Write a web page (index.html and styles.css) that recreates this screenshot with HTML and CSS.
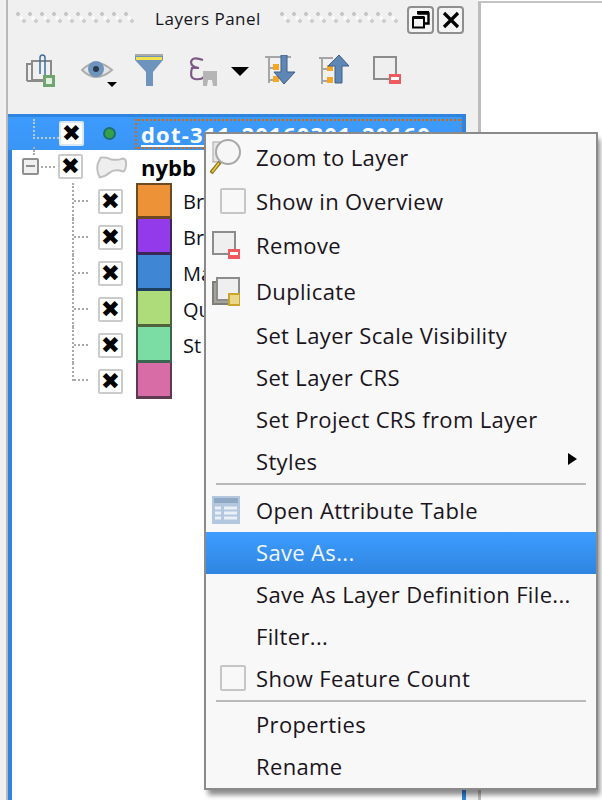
FILE: index.html
```html
<!DOCTYPE html>
<html lang="en">
<head>
<meta charset="utf-8">
<title>Layers Panel</title>
<link rel="stylesheet" href="styles.css">
</head>
<body>
<div class="app">
  <aside class="dock">
    <header class="titlebar">
      <span class="grip grip-left"></span>
      <span class="title">Layers Panel</span>
      <span class="grip grip-right"></span>
      <button class="winbtn">
        <svg width="22" height="22" viewBox="0 0 22 22"><path d="M7.500 4.500h11v10h-4" fill="none" stroke="#000" stroke-width="2.400"/><rect x="7" y="2" width="12" height="3" fill="#000"/><rect x="3" y="8.500" width="11" height="10" fill="none" stroke="#000" stroke-width="2"/><rect x="3" y="7" width="11" height="3" fill="#000"/></svg>
      </button>
      <button class="winbtn">
        <svg width="20" height="20" viewBox="0 0 20 20"><path d="M3 3l14 14M17 3L3 17" stroke="#000" stroke-width="3.200"/></svg>
      </button>
    </header>
    <nav class="toolbar">
      <svg class="tool tool-add" width="30" height="34" viewBox="0 0 30 34">
        <path d="M1 27V10h4M1 27h18" fill="none" stroke="#8b8b8b" stroke-width="2"/>
        <rect x="6" y="7" width="19" height="19" fill="none" stroke="#8b8b8b" stroke-width="2"/>
        <path d="M14 20V4q0-3 2.500-3T19 4v17" fill="none" stroke="#3f6f9e" stroke-width="1.500"/>
        <rect x="17" y="21" width="12" height="12" fill="#6fa56f"/><rect x="20" y="24" width="6" height="6" fill="#e4efe2"/>
      </svg>
      <span class="tool tool-eye">
        <svg width="36" height="30" viewBox="0 0 36 30">
          <path d="M1 13Q15-1 31 13Q15 27 1 13Z" fill="#e4e4e4" stroke="#adadad" stroke-width="2"/>
          <circle cx="15" cy="12" r="8" fill="#6e93bd"/><circle cx="15" cy="12" r="3" fill="#29394a"/>
          <path d="M26 25h10l-5 5z" fill="#000"/>
        </svg>
      </span>
      <svg class="tool tool-filter" width="28" height="32" viewBox="0 0 28 32">
        <path d="M0 1h28v5L18 18v14h-7V18L0 6z" fill="#6e93bd"/>
        <rect x="1" y="3" width="26" height="3" fill="#f2e14c"/><path d="M0 1h28" stroke="#a9a9a9" stroke-width="2"/>
      </svg>
      <span class="tool tool-expr">
        <svg width="60" height="32" viewBox="0 0 60 32">
          <path d="M14 4Q3 0 2 6q0 5 8 6H3Q0 22 6 23q6 1 9-2" fill="none" stroke="#7d5a85" stroke-width="2.200"/>
          <path d="M14 15h14v15h-4l-1-6h-4l-1 6h-4z" fill="#b5b5b5"/>
          <path d="M42 11h18l-9 9z" fill="#000"/>
        </svg>
      </span>
      <svg class="tool tool-expand" width="31" height="30" viewBox="0 0 31 30">
        <path d="M0 2h26M4 2v26M4 13h8M4 25h8" fill="none" stroke="#a6a6a6" stroke-width="2"/>
        <rect x="8" y="9" width="6" height="6" fill="#f5a623"/><rect x="8" y="21" width="6" height="6" fill="#f5a623"/>
        <path d="M16 0h6v17h8L19 29 9 17h7z" fill="#5f87b5" stroke="#3f5f85" stroke-width="1"/>
      </svg>
      <svg class="tool tool-collapse" width="31" height="30" viewBox="0 0 31 30">
        <path d="M0 4h14M3 4v26M3 15h8M3 27h8" fill="none" stroke="#a6a6a6" stroke-width="2"/>
        <rect x="8" y="11" width="6" height="6" fill="#f5a623"/><rect x="8" y="23" width="6" height="6" fill="#f5a623"/>
        <path d="M20 1l10 11h-7v17h-7V12H9z" fill="#5f87b5" stroke="#3f5f85" stroke-width="1"/>
      </svg>
      <svg class="tool tool-remove" width="28" height="28" viewBox="0 0 28 28">
        <rect x="1" y="1" width="22" height="22" fill="#efefef" stroke="#8c8c8c" stroke-width="2"/>
        <rect x="16" y="18" width="12" height="10" fill="#ee5a60"/><rect x="18" y="21" width="8" height="3" fill="#fff"/>
      </svg>
    </nav>
    <section class="tree">
      <div class="row row-selected">
        <span class="branch-root"></span>
        <span class="check check-on">✖</span>
        <span class="dot-slot"><i class="dot"></i></span>
        <span class="layer-name">dot-311_20160301_20160</span>
      </div>
      <div class="row row-group">
        <span class="expander"></span>
        <span class="branch-short"></span>
        <span class="check">✖</span>
        <svg class="poly" width="32" height="24" viewBox="0 0 34 24"><path d="M5 2q6-1 11 2q7 1 12-1q4 0 4 5q0 7-3 9q-8-3-13 0Q10 22 4 23Q0 17 2 8z" fill="#eeeeee" stroke="#bdbdbd" stroke-width="2"/></svg>
        <b class="group-name">nybb</b>
      </div>
      <ul class="legend">
        <li class="legend-row"><span class="branch-leaf"></span><span class="check">✖</span><span class="swatch swatch-orange"></span><span class="legend-label">Br</span></li>
        <li class="legend-row"><span class="branch-leaf"></span><span class="check">✖</span><span class="swatch swatch-purple"></span><span class="legend-label">Br</span></li>
        <li class="legend-row"><span class="branch-leaf"></span><span class="check">✖</span><span class="swatch swatch-blue"></span><span class="legend-label">Ma</span></li>
        <li class="legend-row"><span class="branch-leaf"></span><span class="check">✖</span><span class="swatch swatch-lime"></span><span class="legend-label">Qu</span></li>
        <li class="legend-row"><span class="branch-leaf"></span><span class="check">✖</span><span class="swatch swatch-mint"></span><span class="legend-label">St</span></li>
        <li class="legend-row legend-last"><span class="branch-leaf"></span><span class="check">✖</span><span class="swatch swatch-pink"></span></li>
      </ul>
    </section>
  </aside>
  <main class="canvas"></main>

  <div class="menu">
    <div class="item item-zoom"><span class="mi">
      <svg width="32" height="44" viewBox="0 0 32 44">
        <rect x="3" y="7" width="12" height="20" fill="#e6e6e6" stroke="#a5a5a5"/>
        <path d="M1 38l9-11" stroke="#8a7420" stroke-width="4"/><path d="M2 37l7-9" stroke="#f0d040" stroke-width="1.500"/>
        <circle cx="18" cy="17" r="12" fill="#f6f6f6" stroke="#a8a8a8" stroke-width="2"/>
      </svg></span>Zoom to Layer</div>
    <div class="item item-overview"><span class="mi"><span class="menu-check"></span></span>Show in Overview</div>
    <div class="item item-tall"><span class="mi">
      <svg width="28" height="28" viewBox="0 0 28 28">
        <rect x="1" y="1" width="22" height="22" fill="#efefef" stroke="#8c8c8c" stroke-width="2"/>
        <rect x="16" y="18" width="12" height="10" fill="#ee5a60"/><rect x="18" y="21" width="8" height="3" fill="#fff"/>
      </svg></span>Remove</div>
    <div class="item item-tall"><span class="mi">
      <svg width="28" height="29" viewBox="0 0 28 29">
        <path d="M4 5H1v22h21v-3" fill="#a3a39b" stroke="#7d7d75" stroke-width="2"/>
        <rect x="5" y="1" width="22" height="22" fill="#efefef" stroke="#8c8c8c" stroke-width="2"/>
        <rect x="17" y="17" width="11" height="11" fill="#e8d88c" stroke="#c9a52c" stroke-width="2"/>
      </svg></span>Duplicate</div>
    <div class="item"><span class="mi"></span>Set Layer Scale Visibility</div>
    <div class="item"><span class="mi"></span>Set Layer CRS</div>
    <div class="item"><span class="mi"></span>Set Project CRS from Layer</div>
    <div class="item item-sub"><span class="mi"></span>Styles<i class="sub-arrow"></i></div>
    <hr class="sep sep-first">
    <div class="item item-attr"><span class="mi">
      <svg width="28" height="28" viewBox="0 0 28 28">
        <rect width="28" height="28" fill="#b3c8de"/><rect x="2" y="2" width="24" height="5" fill="#8fa9c4"/>
        <path d="M3 12h6M12 12h13M3 17h6M12 17h13M3 22h6M12 22h13" stroke="#eaf0f6" stroke-width="3"/>
      </svg></span>Open Attribute Table</div>
    <div class="item item-active"><span class="mi"></span>Save As...</div>
    <div class="item"><span class="mi"></span>Save As Layer Definition File...</div>
    <div class="item"><span class="mi"></span>Filter...</div>
    <div class="item"><span class="mi"><span class="menu-check"></span></span>Show Feature Count</div>
    <hr class="sep">
    <div class="item"><span class="mi"></span>Properties</div>
    <div class="item"><span class="mi"></span>Rename</div>
  </div>
</div>
</body>
</html>
```

FILE: styles.css
```css
* { box-sizing: border-box; }
html, body { margin: 0; height: 100%; overflow: hidden; background: #fff; }
body { font-family: "Open Sans", "Liberation Sans", sans-serif; color: #101018; }

.app { position: relative; display: flex; width: 602px; height: 800px; overflow: hidden; }

.dock {
  width: 478px; height: 800px; flex: none;
  background: #f0f0f0;
  padding-left: 6px;
  display: flex; flex-direction: column;
}
.canvas {
  flex: 1; margin-top: 1px;
  background: #fff;
  border-left: 3px solid #bcbcbc;
  border-top: 2px solid #c4c4c4;
}

.titlebar { height: 40px; display: flex; align-items: center; padding-left: 10px; border-left: 2px solid #b9b9b9; }
.grip {
  width: 120px; height: 12px; flex: none; margin-top: -4px;
  background-image:
    radial-gradient(circle at 2px 2px, #c6c6c6 1.800px, transparent 2.200px),
    radial-gradient(circle at 8px 9px, #cfcfcf 1.800px, transparent 2.200px),
    radial-gradient(circle at 5px 6px, #fbfbfb 1.500px, transparent 2px);
  background-size: 12px 12px;
}
.grip-left { margin-left: -2px; }
.title { width: 144px; flex: none; padding-bottom: 4px; text-align: center; font-size: 17px; letter-spacing: .5px; color: #14141c; }
.winbtn {
  width: 27px; height: 28px; padding: 0; margin-left: 3px;
  display: flex; align-items: center; justify-content: center;
  background: #f4f4f4; border: 2px solid #8f8f8f; border-radius: 4px;
}
.grip-right + .winbtn { margin-left: 7px; }

.toolbar {
  height: 74px; display: flex; align-items: flex-start;
  border-left: 2px solid #b9b9b9; padding-left: 18px; padding-top: 14px;
}
.tool { display: block; flex: none; }
.tool-eye { margin-left: 25px; margin-top: 3px; }
.tool-filter { margin-left: 18px; }
.tool-expr { margin-left: 26px; margin-top: 2px; }
.tool-expand { margin-left: 16px; margin-top: 1px; }
.tool-collapse { margin-left: 23px; }
.tool-remove { margin-left: 23px; margin-top: 2px; }

.tree {
  flex: 1; width: 460px;
  background: #fff;
  border-left: 2px solid #b9b9b9;
  position: relative;
}
.tree::before, .tree::after {
  content: ""; position: absolute; top: 0; bottom: 0; width: 4px; background: #2f84e0;
}
.tree::before { left: 0; }
.tree::after { right: 0; }

.row { position: relative; display: flex; align-items: center; }
.row-selected {
  height: 36px;
  padding-left: 2px;
  background: linear-gradient(#3d9bff, #3a95f4);
  color: #fff;
  border-top: 3px solid #2f84e0;
}
.branch-root {
  width: 26px; height: 20px; margin-left: 23px; margin-top: -10px; flex: none;
  border-left: 2px dotted #b9c6cc; border-bottom: 2px dotted #b9c6cc;
}
.branch-root::after {
  content: ""; position: absolute; left: 25px; top: 30px; height: 8px;
  border-left: 2px dotted #a9a9a9;
}
.check {
  width: 25px; height: 25px; flex: none;
  display: flex; align-items: center; justify-content: center;
  background: #fff; border: 2px solid #cbcbcb; border-radius: 2px;
  font: 23px/1 "DejaVu Sans", sans-serif; color: #000;
}
.check-on { border-color: #d8e6f5; }
.dot-slot { width: 51px; display: flex; justify-content: center; flex: none; }
.dot { display: block; width: 13px; height: 13px; border-radius: 50%; background: #35a04a; border: 2px solid #1f6e6e; }
.layer-name {
  width: 328px; height: 30px; flex: none;
  border: 2px dotted #d9680b; padding: 0 4px;
  font-size: 22px; font-weight: 700; line-height: 27px; letter-spacing: 1.200px;
  text-decoration: underline; color: #fff; white-space: nowrap; overflow: hidden;
}

.row-group { height: 33px; padding-left: 14px; }
.expander {
  width: 17px; height: 17px; flex: none; background: #f0f0f0;
  border: 2px solid #8f8f8f; border-radius: 2px; position: relative;
}
.expander::after { content: ""; position: absolute; left: 2px; right: 2px; top: 5px; height: 2px; background: #8f8f8f; }
.branch-short { width: 14px; border-bottom: 2px dotted #a9a9a9; flex: none; margin: 0 3px 0 2px; }
.poly { margin-left: 13px; flex: none; }
.group-name { margin-left: 13px; font-size: 22px; color: #000; }

.legend { list-style: none; margin: 0; padding: 0; }
.legend-row { display: flex; align-items: center; height: 36px; padding-left: 64px; }
.branch-leaf {
  width: 18px; height: 36px; flex: none; margin-right: 8px;
  border-left: 2px dotted #a9a9a9;
  background: linear-gradient(90deg, #a9a9a9 50%, transparent 50%) 0 50% / 4px 2px repeat-x;
}
.legend-last .branch-leaf { height: 18px; margin-top: -18px; background-position: 0 100%; }
.swatch { width: 36px; height: 36px; flex: none; margin-left: 13px; border-style: solid; border-width: 0 2px 3px; }
.legend-row:first-child .swatch { border-top-width: 2px; }
.swatch-orange { background: #ee9238; border-color: #6e4a22; }
.swatch-purple { background: #933bea; border-color: #3a2758; }
.swatch-blue { background: #3f87d5; border-color: #1e3f62; }
.swatch-lime { background: #aedc7a; border-color: #50633c; }
.swatch-mint { background: #7cdda4; border-color: #3a6650; }
.swatch-pink { background: #d76ca6; border-color: #5e3a50; }
.legend-label { margin-left: 11px; font-size: 20px; white-space: nowrap; color: #101018; }

.menu {
  position: absolute; left: 204px; top: 132px; width: 394px; height: 658px;
  background: #f8f8f8;
  border: 2px solid #8a8a8a;
  padding-top: 2px;
  box-shadow: 3px 6px 5px -1px rgba(0,0,0,.45);
  font-size: 22px;
  letter-spacing: .35px;
}
.item { height: 42px; padding-bottom: 2px; display: flex; align-items: center; white-space: nowrap; position: relative; color: #1a1420; }
.item-zoom { height: 44px; }
.item-overview { height: 43px; }
.item-tall { height: 46px; }
.item-attr { height: 43px; }
.item-active { background: linear-gradient(#3d9dff, #2f85e0); color: #f2f6ff; }
.mi { width: 50px; flex: none; display: flex; align-items: center; justify-content: center; padding-right: 10px; }
.menu-check { display: block; width: 26px; height: 26px; margin-left: 14px; flex: none; background: #f8f8f8; border: 2px solid #c6c6c6; border-radius: 2px; }
.sub-arrow {
  position: absolute; left: 362px; top: 12px;
  border-left: 9px solid #000; border-top: 6px solid transparent; border-bottom: 6px solid transparent;
}
.sep { height: 2px; margin: 0 10px; border: 0; background: #b9b9b9; }
.sep-first { margin-bottom: 4px; }
.sep:not(.sep-first) { margin-bottom: 2px; }
```
